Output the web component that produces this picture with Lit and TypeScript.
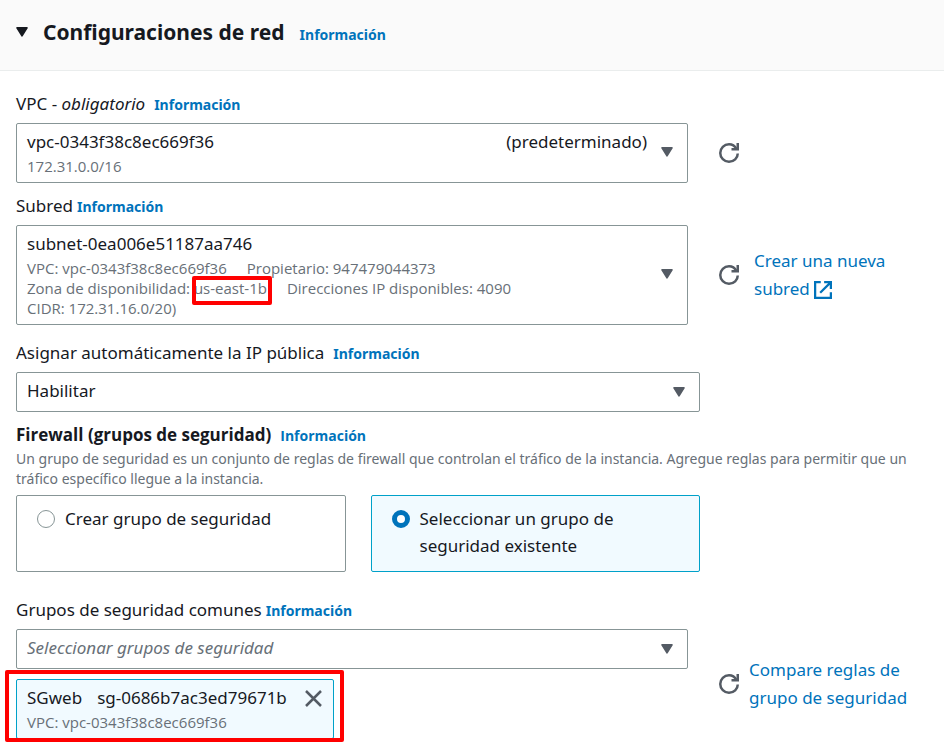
import { LitElement, html, css, svg } from "lit";
import { customElement, state } from "lit/decorators.js";

const caret = html`<svg class="caret" viewBox="0 0 12 10" aria-hidden="true">
  <path d="M1 0.9h10L6 8.800z" fill="currentColor" stroke="currentColor" stroke-width="1.6" stroke-linejoin="round" />
</svg>`;

const refreshShape = svg`
  <path d="M15 8.3c0 3.7-3.1 6.7-7 6.7s-7-3.1-7-7 3.1-7 7-7c2.6 0 4.700 1.300 5.900 3.600" />
  <path d="M10 5h5V0" />`;

@customElement("app-root")
export class AppRoot extends LitElement {
  @state() private mode = "existing";

  static styles = css`
    :host {
      display: block;
      font-family: "Noto Sans", "Open Sans", sans-serif;
      font-size: 17px;
      line-height: 27px;
      color: #16191f;
      background: #fff;
    }
    * {
      box-sizing: border-box;
    }
    button,
    select {
      font: inherit;
      color: inherit;
      margin: 0;
      cursor: pointer;
    }
    a {
      color: #0073bb;
      text-decoration: none;
    }
    svg {
      display: block;
      flex: none;
    }
    header {
      display: flex;
      align-items: baseline;
      gap: 15px;
      padding: 15px 16px 21px;
      background: #fafafa;
      border-bottom: 1px solid #eaeded;
    }
    .toggle {
      display: flex;
      align-items: center;
      gap: 15px;
      padding: 0;
      border: 0;
      background: none;
      font-size: 21px;
      font-weight: 700;
      line-height: 34px;
    }
    h2 {
      align-self: baseline;
      margin: 0;
      font: inherit;
    }
    .info {
      font-size: 14px;
      font-weight: 700;
      line-height: 20px;
    }
    main {
      padding: 19px 16px 5px;
    }
    .label {
      display: flex;
      align-items: baseline;
      gap: 9px;
      margin-bottom: 6px;
    }
    .label.tight {
      gap: 4px;
    }
    .label.strong {
      font-family: "Open Sans", "Noto Sans", sans-serif;
      font-weight: 700;
      margin: 0;
    }
    .field {
      margin-bottom: 9px;
    }
    .field.roomy {
      margin-bottom: 14px;
    }
    .row {
      display: grid;
      grid-template-columns: minmax(0, 3fr) minmax(0, 1fr);
      align-items: center;
    }
    .inset {
      padding-right: 12px;
    }
    .side {
      display: flex;
      align-items: center;
      gap: 10px;
      padding-left: 14px;
      line-height: 28px;
    }
    .side.wide {
      gap: 15px;
    }
    .icon-button {
      display: flex;
      padding: 5px 0 5px 5px;
      border: 0;
      background: none;
      color: #545b64;
    }
    .refresh {
      width: 20px;
      height: 20px;
      fill: none;
      stroke: currentColor;
      stroke-width: 2;
    }
    .external {
      display: inline-block;
      width: 18px;
      height: 18px;
      vertical-align: -4px;
      fill: none;
      stroke: currentColor;
      stroke-width: 2;
    }
    .caret {
      width: 12px;
      height: 10px;
      color: #545b64;
    }
    .toggle .caret {
      color: #16191f;
    }
    .box {
      display: flex;
      align-items: center;
      gap: 14px;
      width: 100%;
      padding: 4px 14px 6px 10px;
      border: 1px solid #879596;
      border-radius: 2px;
      background: #fff;
      text-align: left;
    }
    .body {
      flex: 1;
      min-width: 0;
    }
    .title {
      display: flex;
      justify-content: space-between;
    }
    .meta {
      display: flex;
      flex-wrap: wrap;
      column-gap: 20px;
      margin-top: 1px;
      font-family: "Open Sans", "Noto Sans", sans-serif;
      font-size: 15px;
      line-height: 20px;
      color: #687078;
    }
    .break {
      flex-basis: 100%;
    }
    .mark {
      position: relative;
    }
    .mark::after {
      content: "";
      position: absolute;
      inset: -2px -5px -7px -2px;
      border: 4px solid #ff0000;
      border-radius: 2px;
    }
    .pick {
      display: grid;
      align-items: center;
    }
    .pick > * {
      grid-area: 1 / 1;
    }
    .pick select {
      appearance: none;
      width: 100%;
      height: 40px;
      padding: 0 40px 4px 10px;
      border: 1px solid #879596;
      border-radius: 2px;
      background: #fff;
    }
    .pick select.empty {
      font-style: italic;
      color: #687078;
    }
    .pick .caret {
      justify-self: end;
      margin-right: 15px;
      pointer-events: none;
    }
    .hint {
      margin: 1px 0 6px;
      font-size: 14px;
      line-height: 20px;
      color: #687078;
    }
    .tiles {
      display: grid;
      grid-template-columns: 1fr 1fr;
      gap: 25px;
      margin-bottom: 24px;
    }
    .tile {
      display: flex;
      align-items: flex-start;
      gap: 10px;
      padding: 9px 20px 12px;
      border: 1px solid #879596;
      border-radius: 2px;
      cursor: pointer;
    }
    .tile.on {
      background: #f1faff;
      border-color: #00a1c9;
    }
    .tile input {
      appearance: none;
      flex: none;
      width: 18px;
      height: 18px;
      margin: 5px 0 0;
      border: 1px solid #879596;
      border-radius: 50%;
      background: #fff;
    }
    .tile input:checked {
      border: 5px solid #0073bb;
    }
    .token {
      position: relative;
      display: flex;
      width: fit-content;
      gap: 18px;
      margin-top: 10px;
      padding: 4px 11px 6px 10px;
      border: 1px solid #00a1c9;
      border-radius: 2px;
      background: #f1faff;
    }
    .token::after {
      content: "";
      position: absolute;
      inset: -10px -11px -4px -12px;
      border: 4px solid #ff0000;
      border-radius: 2px;
      pointer-events: none;
    }
    .token .title {
      justify-content: flex-start;
      gap: 15px;
    }
    .remove {
      align-self: flex-start;
      padding: 6px 0;
      border: 0;
      background: none;
      color: #545b64;
    }
    .remove svg {
      width: 17px;
      height: 17px;
      fill: none;
      stroke: currentColor;
      stroke-width: 2.5;
    }
  `;

  private info() {
    return html`<a class="info" href="#">Información</a>`;
  }

  private refresh(label: string) {
    return html`<button class="icon-button" type="button" aria-label=${label}>
      <svg class="refresh" viewBox="0 0 16 16" aria-hidden="true">${refreshShape}</svg>
    </button>`;
  }

  private tile(value: string, text: string) {
    const on = this.mode === value;
    return html`<label class="tile ${on ? "on" : ""}">
      <input type="radio" name="group" .checked=${on} @change=${() => (this.mode = value)} />
      <span>${text}</span>
    </label>`;
  }

  render() {
    return html`
      <header>
        <button class="toggle" type="button" aria-expanded="true">
          ${caret}
          <h2>Configuraciones de red</h2>
        </button>
        ${this.info()}
      </header>
      <main>
        <div class="field">
          <div class="label">
            <label for="vpc">VPC - <em>obligatorio</em></label>${this.info()}
          </div>
          <div class="row">
            <div class="inset">
              <button id="vpc" class="box" type="button" aria-haspopup="listbox">
                <div class="body">
                  <div class="title"><span>vpc-0343f38c8ec669f36</span><span>(predeterminado)</span></div>
                  <div class="meta">172.31.0.0/16</div>
                </div>
                ${caret}
              </button>
            </div>
            <div class="side">${this.refresh("Actualizar VPC")}</div>
          </div>
        </div>

        <div class="field roomy">
          <div class="label tight"><label for="subnet">Subred</label>${this.info()}</div>
          <div class="row">
            <div class="inset">
              <button id="subnet" class="box" type="button" aria-haspopup="listbox">
                <div class="body">
                  <div class="title">subnet-0ea006e51187aa746</div>
                  <div class="meta">
                    <span>VPC: vpc-0343f38c8ec669f36</span>
                    <span>Propietario: 947479044373</span>
                    <span class="break"></span>
                    <span>Zona de disponibilidad: <span class="mark">us-east-1b</span></span>
                    <span>Direcciones IP disponibles: 4090</span>
                    <span class="break">CIDR: 172.31.16.0/20)</span>
                  </div>
                </div>
                ${caret}
              </button>
            </div>
            <div class="side wide">
              ${this.refresh("Actualizar subredes")}
              <a href="#">Crear una nueva subred
                <svg class="external" viewBox="0 0 16 16" aria-hidden="true">
                  <path d="M6 1H1v14h14V10M9 1h6v6M15 1L5.500 10.500" />
                </svg></a>
            </div>
          </div>
        </div>

        <div class="field">
          <div class="label">
            <label for="public-ip">Asignar automáticamente la IP pública</label>${this.info()}
          </div>
          <div class="row">
            <div class="pick">
              <select id="public-ip">
                <option>Habilitar</option>
              </select>
              ${caret}
            </div>
          </div>
        </div>

        <div class="label strong"><span id="firewall">Firewall (grupos de seguridad)</span>${this.info()}</div>
        <p class="hint">
          Un grupo de seguridad es un conjunto de reglas de firewall que controlan el tráfico de la
          instancia. Agregue reglas para permitir que un tráfico específico llegue a la instancia.
        </p>
        <div class="row">
          <div class="tiles" role="radiogroup" aria-labelledby="firewall">
            ${this.tile("new", "Crear grupo de seguridad")}
            ${this.tile("existing", "Seleccionar un grupo de seguridad existente")}
          </div>
        </div>

        <div class="label tight">
          <label for="groups">Grupos de seguridad comunes</label>${this.info()}
        </div>
        <div class="row">
          <div class="inset">
            <div class="pick">
              <select id="groups" class="empty">
                <option>Seleccionar grupos de seguridad</option>
              </select>
              ${caret}
            </div>
            <div class="token">
              <div>
                <div class="title"><span>SGweb</span><span>sg-0686b7ac3ed79671b</span></div>
                <div class="meta">VPC: vpc-0343f38c8ec669f36</div>
              </div>
              <button class="remove" type="button" aria-label="Quitar SGweb">
                <svg viewBox="0 0 17 17" aria-hidden="true"><path d="M1 1l15 15M16 1L1 16" /></svg>
              </button>
            </div>
          </div>
          <div class="side">
            ${this.refresh("Actualizar grupos de seguridad")}
            <a href="#">Compare reglas de grupo de seguridad</a>
          </div>
        </div>
      </main>
    `;
  }
}
